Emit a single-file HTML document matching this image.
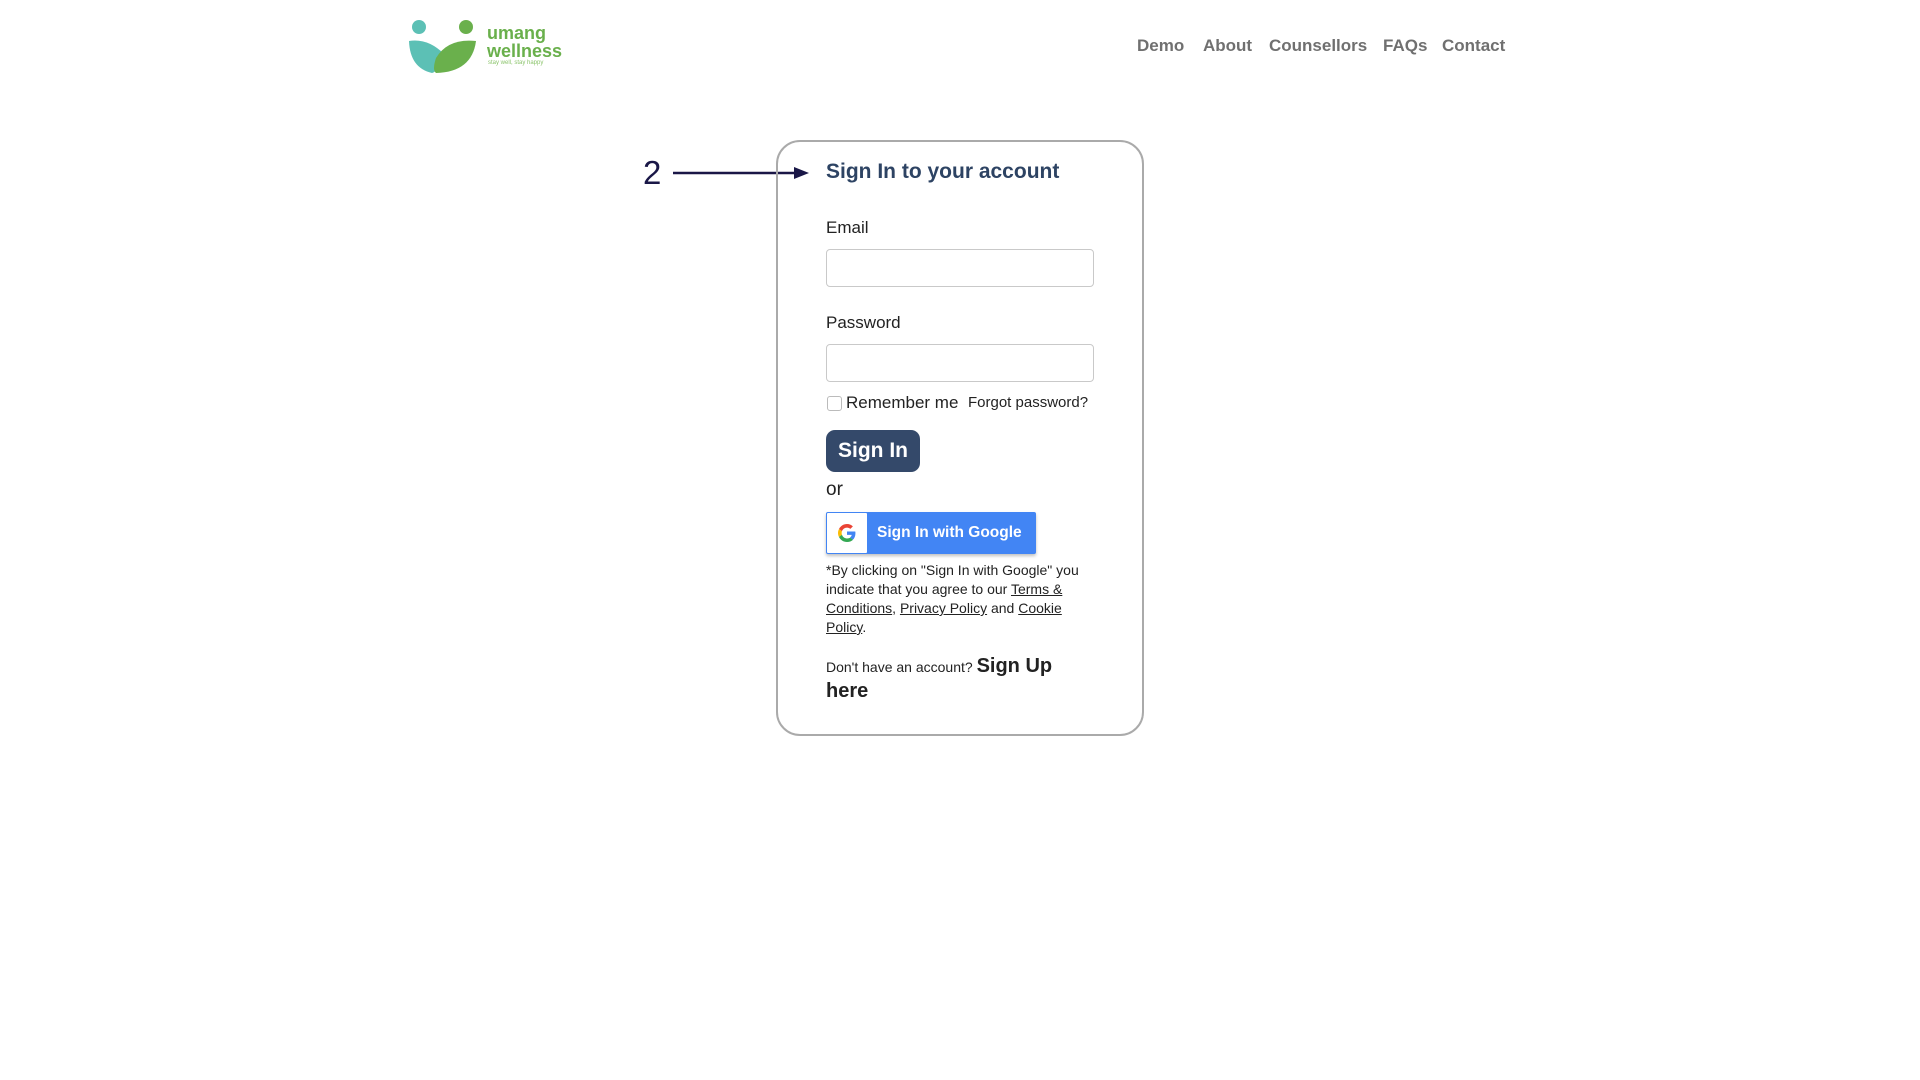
<!DOCTYPE html>
<html><head><meta charset="utf-8">
<style>
*{box-sizing:border-box;margin:0;padding:0}
body{width:1920px;height:1080px;background:#fff;font-family:"Liberation Sans",sans-serif;position:relative;overflow:hidden;color:#222}
.abs{position:absolute}
.nav a{position:absolute;top:36px;font-size:17px;font-weight:bold;color:#707070;text-decoration:none;white-space:nowrap}
.card{left:776px;top:140px;width:368px;height:596px;border:2px solid #aaa;border-radius:24px}
.lbl{font-size:17px;color:#222}
.inp{width:268px;height:38px;border:1px solid #c9c9c9;border-radius:4px;background:#fff}
.small{font-size:14px;line-height:19px;color:#222}
.small u{text-decoration:underline}
</style></head><body>
<svg class="abs" style="left:408px;top:18px" width="72" height="56" viewBox="0 0 72 56">
<circle cx="11" cy="9" r="7" fill="#5cc0b5"/>
<circle cx="58" cy="9" r="7" fill="#6ab04c"/>
<path d="M1 23 Q20 20 36 36 Q30 54 24 55 Q2 50 1 23Z" fill="#5cc0b5"/>
<path d="M68 23 Q40 20 28 40 Q24 52 28 55 Q64 54 68 23Z" fill="#6ab04c"/>
</svg>
<div class="abs" style="left:487px;top:24px;font-size:18px;font-weight:bold;color:#6ab04c;line-height:18px">umang<br>wellness</div>
<div class="abs" style="left:488px;top:60px;font-size:6px;color:#8bc46b">stay well, stay happy</div>
<div class="nav">
<a style="left:1137px">Demo</a><a style="left:1203px">About</a><a style="left:1269px">Counsellors</a><a style="left:1383px">FAQs</a><a style="left:1442px">Contact</a>
</div>
<div class="abs" style="left:643px;top:154px;font-size:33px;color:#1a1747">2</div>
<svg class="abs" style="left:672px;top:165px" width="140" height="16"><line x1="1" y1="8" x2="125" y2="8" stroke="#1a1747" stroke-width="2.5"/><path d="M122 2 L137 8 L122 14Z" fill="#1a1747"/></svg>
<div class="abs card"></div>
<div class="abs" style="left:826px;top:160px;font-size:21px;font-weight:bold;color:#2d4363">Sign In to your account</div>
<div class="abs lbl" style="left:826px;top:218px">Email</div>
<div class="abs inp" style="left:826px;top:249px"></div>
<div class="abs lbl" style="left:826px;top:313px">Password</div>
<div class="abs inp" style="left:826px;top:344px"></div>
<div class="abs" style="left:827px;top:396px;width:15px;height:15px;border:1px solid #bbb;border-radius:3px"></div>
<div class="abs" style="left:846px;top:393px;font-size:17px">Remember me</div>
<div class="abs" style="left:968px;top:394px;font-size:15px">Forgot password?</div>
<div class="abs" style="left:826px;top:430px;width:94px;height:42px;background:#34496a;border-radius:9px;color:#fff;font-size:21px;font-weight:bold;text-align:center;line-height:42px">Sign In</div>
<div class="abs" style="left:826px;top:479px;font-size:19px">or</div>
<div class="abs" style="left:826px;top:512px;width:210px;height:42px;background:#4285f4;border-radius:2px;box-shadow:0 2px 3px rgba(0,0,0,.25)">
 <div class="abs" style="left:1px;top:1px;width:40px;height:40px;background:#fff;border-radius:1px">
 <svg style="position:absolute;left:11px;top:11px" width="18" height="18" viewBox="0 0 48 48"><path fill="#EA4335" d="M24 9.5c3.5 0 6.6 1.2 9 3.5l6.7-6.7C35.6 2.4 30.2 0 24 0 14.6 0 6.6 5.4 2.7 13.3l7.8 6C12.4 13.6 17.7 9.5 24 9.5z"/><path fill="#4285F4" d="M46.5 24.5c0-1.6-.1-3.1-.4-4.5H24v9h12.7c-.6 3-2.3 5.5-4.8 7.2l7.6 5.9c4.4-4.1 7-10.1 7-17.6z"/><path fill="#FBBC05" d="M10.5 28.7c-.5-1.5-.8-3.1-.8-4.7s.3-3.2.8-4.7l-7.8-6C1 16.6 0 20.2 0 24s1 7.4 2.7 10.7l7.8-6z"/><path fill="#34A853" d="M24 48c6.5 0 11.9-2.1 15.9-5.8l-7.6-5.9c-2.1 1.4-4.9 2.3-8.3 2.3-6.3 0-11.6-4.2-13.5-9.9l-7.8 6C6.6 42.6 14.6 48 24 48z"/></svg>
 </div>
 <div class="abs" style="left:51px;top:0;line-height:42px;color:#fff;font-size:15.5px;font-weight:bold;white-space:nowrap">Sign In with Google</div>
</div>
<div class="abs small" style="left:826px;top:561px;width:275px">*By clicking on "Sign In with Google" you indicate that you agree to our <u>Terms &amp; Conditions</u>, <u>Privacy Policy</u> and <u>Cookie Policy</u>.</div>
<div class="abs" style="left:826px;top:654px;width:270px;font-size:14px;line-height:24px">Don't have an account? <b style="font-size:20px">Sign Up here</b></div>
</body></html>
